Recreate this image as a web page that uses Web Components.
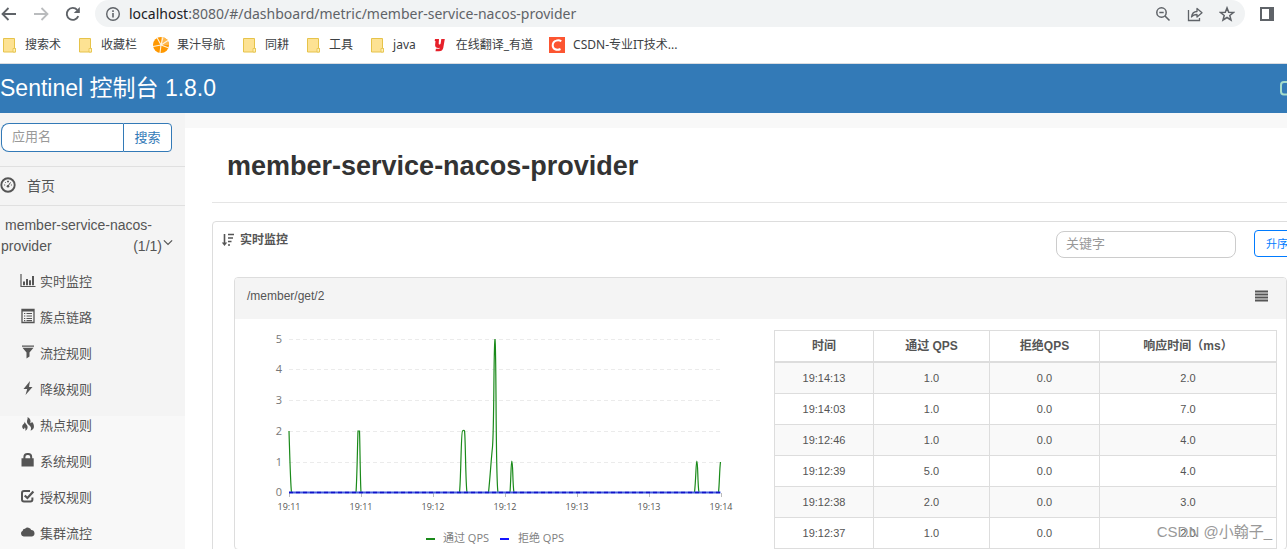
<!DOCTYPE html>
<html lang="zh-CN">
<head>
<meta charset="utf-8">
<title>Sentinel 控制台</title>
<style>
  html { height: 100%; }
  body {
    margin: 0; height: 100%; overflow: hidden; background: #fff; color: #555;
    font-family: "Liberation Sans", "Noto Sans CJK SC", sans-serif; font-size: 14px;
  }
</style>
</head>
<body>
<sentinel-page></sentinel-page>

<script>
const ICONS = {
  back: '<path d="M15 8H2M7.500 2L1.500 8l6 6" fill="none" stroke="currentColor" stroke-width="1.800"/>',
  forward: '<path d="M1 8h13M8.500 2l6 6-6 6" fill="none" stroke="currentColor" stroke-width="1.800"/>',
  reload: '<path d="M13.300 10.200A6 6 0 1 1 12.200 3.800" fill="none" stroke="currentColor" stroke-width="1.900"/><path d="M14.800 1v6H8.800z" fill="currentColor"/>',
  info: '<circle cx="8" cy="8" r="6.300" fill="none" stroke="currentColor" stroke-width="1.400"/><path d="M7.200 7h1.600v4.500H7.200zM7.200 4.300h1.600v1.600H7.200z" fill="currentColor"/>',
  zoomout: '<circle cx="6.500" cy="6.500" r="4.700" fill="none" stroke="currentColor" stroke-width="1.500"/><path d="M10 10l4.500 4.500M4.300 6.500h4.400" stroke="currentColor" stroke-width="1.600"/>',
  share: '<path d="M1.500 4v10.500h11V12" fill="none" stroke="currentColor" stroke-width="1.300"/><path d="M4.500 11c.5-3.600 2.300-5.500 5.500-5.500V2.500L15 6.800 10 11V8.500c-2.500 0-4.300.8-5.500 2.500z" fill="none" stroke="currentColor" stroke-width="1.300" stroke-linejoin="round"/>',
  star: '<path d="M8 1.900l1.700 4.300 4.700.3-3.600 3 1.200 4.500L8 11.500 4 14l1.200-4.500-3.600-3 4.700-.3z" fill="none" stroke="currentColor" stroke-width="1.500"/>',
  panel: '<path d="M1 1h14v14H1zM3 3v10h7V3z" fill="currentColor" fill-rule="evenodd"/>',
  folder: '<path d="M2.500 1.500h11v9.500l1 .5v3.500h-12z" fill="#fde293" stroke="#e6c34a"/><path d="M12 15v-3.500h2.500V15z" fill="#fff0b8" stroke="#e6c34a" stroke-width=".8"/>',
  orange: '<circle cx="8" cy="8" r="8" fill="#ff9800"/><path d="M8 0a8 8 0 0 1 8 8H8z" fill="#ffb74d"/><path d="M8 8L4 .500M8 8l7-4.500M8 8l8 3M8 8l-1 8M8 8l-8 1.500M8 8L10 0" stroke="#fff3df" stroke-width="1.100"/>',
  youdao: '<path d="M3 2h4l-.3 4.500c0 1.500 1.800 1 2-.3L9.300 2h3.500l-1.500 8.700c-.5 2.500-2 3.500-4.300 3.500H3.500l.4-2.400H6.300c1 0 1.500-.3 1.700-1-3 .7-5-.4-4.900-2.700L3.500 4H2.700z" fill="#e6202a"/>',
  csdn: '<path d="M0 0h16v16H0z" fill="#fc5531"/><path d="M12.300 4.300C11 3.400 8.900 3 7.300 3.600 5 4.300 3.700 6.200 3.700 8.500c0 3.600 4 5.300 7.800 3.500" fill="none" stroke="#fff" stroke-width="2"/>',
  gauge: '<circle cx="8" cy="8" r="6.700" fill="none" stroke="currentColor" stroke-width="1.900"/><circle cx="8" cy="9.200" r="1.300" fill="currentColor"/><path d="M8 9l2.600-3.600" stroke="currentColor"/><path d="M4 8h1.200M5.200 5.200l.8.8M7.500 4h1v1h-1zM10.900 8H12" stroke="currentColor" stroke-width=".9" fill="none"/>',
  bars: '<path d="M1 2v12.500H15.500" fill="none" stroke="currentColor" stroke-width="1.200"/><path d="M3 9.500h2v3.700H3zM6 7h2v6.200H6zM9 8.300h2v4.900H9zM12 4h2v9.200h-2z" fill="currentColor"/>',
  list: '<path d="M2 1.500h12v13H2z" fill="none" stroke="currentColor" stroke-width="1.300"/><path d="M2 1h12v2.500H2z" fill="currentColor"/><path d="M4 5.500h1.300M6.500 5.500H12M4 8h1.300M6.500 8H12M4 10.500h1.300M6.500 10.500H12M4 12.700h1.300M6.500 12.700H12" stroke="currentColor" stroke-width="1.200"/>',
  funnel: '<path d="M2 1.500h12v1.300H2zM2.500 3.800h11L9.500 8.500v4l-3 2V8.500z" fill="currentColor"/>',
  bolt: '<path d="M10 1L3.500 9h3.700L5.500 15 12.500 7H9z" fill="currentColor"/>',
  fire: '<path d="M7.500 1c3 1.500 3.500 3.500 2.800 6 .7.400 1.400 0 1.500-1.200 2 1.700 2.500 4 2 6-.5 1.500-1.800 2.500-3.300 2.800 1.200-2 .5-3.600-1-5C7.900 8.200 6.700 7 7 5c.2-1.500 1-2.500.5-4zM4.700 5.500c.3 2.200 3.200 3.500 2.900 6-.1 1.600-1 2.700-2.400 3.300.6-1.500.2-2.600-.4-3.500-.2 1-.6 1.400-1.200 2C1.500 11.700 2 9.500 3.300 8.300c.9-.9 1.400-1.700 1.400-2.800z" fill="currentColor"/>',
  lock: '<path d="M1.500 6.200h1.900V5a4 4 0 0 1 4-4h.8a4 4 0 0 1 4 4v1.200h1.500V14.500H1.500zM5.400 6.200h4.800V5A2 2 0 0 0 8.200 3h-.8a2 2 0 0 0-2 2z" fill="currentColor" fill-rule="evenodd"/>',
  check: '<path d="M10 3H4a2 2 0 0 0-2 2v6.500a2 2 0 0 0 2 2h6.400a2 2 0 0 0 2-2V9.500" fill="none" stroke="currentColor" stroke-width="2"/><path d="M4.700 7.500L7.400 10l6-6.500" fill="none" stroke="currentColor" stroke-width="2.200"/>',
  cloud: '<path d="M3.700 12.500a3 3 0 0 1-1-5.700 2.200 2.200 0 0 1 2.300-2.100A3.900 3.900 0 0 1 11.300 6a3.300 3.300 0 0 1 .7 6.500z" fill="currentColor"/>',
  chevron: '<path d="M2.500 4.500l5.500 5.500 5.500-5.500" fill="none" stroke="currentColor" stroke-width="1.600"/>',
  sort: '<path d="M3.500 2v10" stroke="currentColor" stroke-width="1.600"/><path d="M.8 10.500h5.400L3.500 14z" fill="currentColor"/><path d="M7 2.500h6M7 6h5M7 9.500h3.500M7 13h2" stroke="currentColor" stroke-width="1.600"/>',
  lines: '<path d="M1 3.500h13M1 6.500h13M1 9.500h13M1 12.500h13" stroke="currentColor" stroke-width="1.800"/>',
  locale: '<path d="M16 2H7a3 3 0 0 0-3 3v6.500a3 3 0 0 0 3 3h9" fill="none" stroke="currentColor" stroke-width="2"/><path d="M11 7h5v4h-5z" fill="currentColor"/>'
};

const define = (name, html, setup) => customElements.define(name, class extends HTMLElement {
  constructor() {
    super();
    const template = document.createElement('template');
    template.innerHTML = html;
    this.attachShadow({ mode: 'open' }).append(template.content.cloneNode(true));
  }
  connectedCallback() { if (setup) setup(this, this.shadowRoot); }
});

define('ui-icon', `
  <style>
    :host { display: inline-block; width: 16px; height: 16px; flex: none; }
    svg { display: block; width: 100%; height: 100%; }
  </style>
  <svg viewBox="0 0 16 16" aria-hidden="true"></svg>`,
  (host, root) => { root.querySelector('svg').innerHTML = ICONS[host.getAttribute('name')] || ''; });

define('address-bar', `
  <style>
    :host { display: flex; align-items: center; height: 27px; color: #5f6368; padding: 0 12px 0 1px; }
    button { border: 0; padding: 0; background: none; color: inherit; display: flex; }
    .nav { display: flex; gap: 16px; }
    .nav button:nth-child(2) { color: #babcbe; }
    .pill { flex: 1; display: flex; align-items: center; gap: 8px; height: 27px; margin: 0 14px;
      padding: 0 10px; border-radius: 14px; background: #f1f3f4; }
    .url { flex: 1; font: 14px/20px "Noto Sans", sans-serif; }
    b { font-weight: 400; color: #202124; }
    .tools { display: flex; gap: 16px; }
  </style>
  <div class="nav">
    <button aria-label="后退"><ui-icon name="back"></ui-icon></button>
    <button aria-label="前进"><ui-icon name="forward"></ui-icon></button>
    <button aria-label="刷新"><ui-icon name="reload"></ui-icon></button>
  </div>
  <div class="pill">
    <ui-icon name="info"></ui-icon>
    <span class="url"><b>localhost</b>:8080/#/dashboard/metric/member-service-nacos-provider</span>
    <div class="tools">
      <button aria-label="缩放"><ui-icon name="zoomout"></ui-icon></button>
      <button aria-label="分享"><ui-icon name="share"></ui-icon></button>
      <button aria-label="收藏"><ui-icon name="star"></ui-icon></button>
    </div>
  </div>
  <button aria-label="侧边栏"><ui-icon name="panel"></ui-icon></button>`);

define('bookmark-link', `
  <style>
    :host { display: block; }
    a { display: flex; align-items: center; gap: 8px; color: #3c4043; text-decoration: none;
      white-space: nowrap; font: 12px/18px "Noto Sans", "Noto Sans CJK SC", sans-serif; }
  </style>
  <a href="#"><ui-icon></ui-icon><slot></slot></a>`,
  (host, root) => {
    const icon = document.createElement('ui-icon');
    icon.setAttribute('name', host.getAttribute('icon'));
    root.querySelector('ui-icon').replaceWith(icon);
  });

define('bookmark-bar', `
  <style>
    :host { display: flex; align-items: center; gap: 16px; height: 36px; padding-left: 1px;
      border-bottom: 1px solid #dadce0; }
  </style>
  <bookmark-link icon="folder">搜索术</bookmark-link>
  <bookmark-link icon="folder">收藏栏</bookmark-link>
  <bookmark-link icon="orange">果汁导航</bookmark-link>
  <bookmark-link icon="folder">同耕</bookmark-link>
  <bookmark-link icon="folder">工具</bookmark-link>
  <bookmark-link icon="folder">java</bookmark-link>
  <bookmark-link icon="youdao">在线翻译_有道</bookmark-link>
  <bookmark-link icon="csdn">CSDN-专业IT技术...</bookmark-link>`);

define('app-header', `
  <style>
    :host { display: flex; justify-content: space-between; align-items: center; height: 47px;
      padding-bottom: 2px; background: #337ab7; color: #fff; overflow: hidden; }
    a { color: inherit; text-decoration: none; font-size: 23px; line-height: 46px; }
    ui-icon { color: #a5dccb; margin-right: -6px; }
  </style>
  <a href="#">Sentinel 控制台 1.8.0</a>
  <ui-icon name="locale"></ui-icon>`);

define('nav-link', `
  <style>
    :host { display: block; }
    a { display: flex; align-items: center; gap: 4px; height: 36px; padding-left: 20px;
      color: #555; text-decoration: none; font-size: 13px; }
  </style>
  <a href="#"><ui-icon></ui-icon><slot></slot></a>`,
  (host, root) => {
    const icon = document.createElement('ui-icon');
    icon.setAttribute('name', host.getAttribute('icon'));
    root.querySelector('ui-icon').replaceWith(icon);
  });

define('side-nav', `
  <style>
    :host { display: block; width: 185px; flex: none; box-sizing: border-box; color: #555;
      background: linear-gradient(#f4f4f4 303px, #f8f8f8 303px); }
    form { display: flex; padding: 10px 13px 14px 1px; border-bottom: 1px solid #e0e0e0; }
    input, button { box-sizing: border-box; height: 29px; border: 1px solid #337ab7; background: #fff;
      font-family: inherit; font-size: 13px; }
    input { flex: 1; min-width: 0; padding: 0 10px 2px; border-right: 0; border-radius: 8px 0 0 8px; }
    input::placeholder { color: #999; }
    button { width: 49px; padding: 0 0 2px; color: #337ab7; border-radius: 0 4px 4px 0; }
    .home { display: flex; align-items: center; gap: 11px; height: 36px; padding-bottom: 2px;
      border-bottom: 1px solid #e0e0e0; color: #555; text-decoration: none; }
    .app { display: block; padding: 9px 13px 5px 1px; line-height: 21px; color: #555; text-decoration: none; }
    .row { display: flex; }
    .row span { flex: 1; }
    .first { padding-left: 4px; }
    .row ui-icon { width: 12px; height: 12px; margin-top: 1px; margin-right: -2px; }
  </style>
  <form><input aria-label="应用名" placeholder="应用名"><button type="button">搜索</button></form>
  <a class="home" href="#"><ui-icon name="gauge"></ui-icon>首页</a>
  <a class="app" href="#">
    <div class="first">member-service-nacos-</div>
    <div class="row"><span>provider</span>(1/1)<ui-icon name="chevron"></ui-icon></div>
  </a>
  <nav>
    <nav-link icon="bars">实时监控</nav-link>
    <nav-link icon="list">簇点链路</nav-link>
    <nav-link icon="funnel">流控规则</nav-link>
    <nav-link icon="bolt">降级规则</nav-link>
    <nav-link icon="fire">热点规则</nav-link>
    <nav-link icon="lock">系统规则</nav-link>
    <nav-link icon="check">授权规则</nav-link>
    <nav-link icon="cloud">集群流控</nav-link>
  </nav>`);

define('qps-chart', `
  <style>
    :host { display: block; }
    svg { display: block; width: 100%; height: auto; font-family: "Open Sans", "Noto Sans CJK SC", sans-serif; }
    .grid { stroke: #ebebeb; stroke-dasharray: 4 3; }
    .y text { font-size: 11px; text-anchor: end; fill: #777; }
    .x text { font-size: 9px; text-anchor: middle; fill: #555; }
    .legend { font-size: 11px; fill: #808080; }
  </style>
  <svg viewBox="0 0 539 230" role="img" aria-label="QPS">
    <g class="grid"></g><g class="y"></g><g class="x"></g>
    <path d="M54 112C55 145 55.500 165 56.500 173.500H121C122 160 122.500 125 123 112H124.500C125 125 125.200 160 126 173.500H224.500C226 160 226 113 227.500 112Q229 110.500 229.500 112C230.500 116 230.500 165 232 173.500H253.500C255 160 256 142 257.500 128C259.300 105 258.500 30 260 20C261.500 30 260.500 160 263 173.500H275C276 160 276 142 276.800 142C278 142 277.500 165 279 173.500H459.500C461 160 461 142 461.800 142C463 142 462.500 165 464 173.500H483.500C484.500 165 484.500 150 485.500 143" fill="none" stroke="#1a8a1a" stroke-width="1.200"/>
    <path d="M54 173.500H485.500" stroke="#4660e0" stroke-width="2"/>
    <path d="M54 173.500H485.500" stroke="#1212c8" stroke-width="1.500" stroke-dasharray="4 3"/>
    <path d="M191 220h9" stroke="#1a8a1a" stroke-width="2"/>
    <text class="legend" x="208" y="223">通过 QPS</text>
    <path d="M265 220h9" stroke="#1414ff" stroke-width="2"/>
    <text class="legend" x="283" y="223">拒绝 QPS</text>
  </svg>`,
  (host, root) => {
    const ys = [173, 143, 112, 81, 50, 20];
    root.querySelector('.grid').innerHTML = ys.slice(1).map(y => `<path d="M54 ${y}.5H485"/>`).join('');
    root.querySelector('.y').innerHTML = ys.map((y, i) => `<text x="47" y="${y + 4}">${i}</text>`).join('');
    root.querySelector('.x').innerHTML = ['19:11', '19:11', '19:12', '19:12', '19:13', '19:13', '19:14']
      .map((t, i) => `<path d="M${54 + i * 72}.500 174v4" stroke="#bbb"/><text x="${54 + i * 72}" y="191">${t}</text>`).join('');
  });

define('qps-table', `
  <style>
    :host { display: block; padding-top: 11px; }
    table { width: 100%; border-collapse: collapse; table-layout: fixed; color: #555; font-size: 11px; text-align: center; }
    th, td { border: 1px solid #ddd; padding: 0; }
    th { height: 30px; border-bottom-width: 2px; font-size: 12px; line-height: 18px; }
    td { height: 30px; line-height: 16px; }
    tbody tr:nth-child(odd) { background: #f9f9f9; }
    .time { width: 99px; }
    .pass { width: 116px; }
    .block { width: 110px; }
  </style>
  <table>
    <colgroup><col class="time"><col class="pass"><col class="block"><col></colgroup>
    <thead><tr><th>时间</th><th>通过 QPS</th><th>拒绝QPS</th><th>响应时间（ms）</th></tr></thead>
    <tbody></tbody>
  </table>`,
  (host, root) => {
    root.querySelector('tbody').innerHTML = [
      ['19:14:13', '1.0', '0.0', '2.0'], ['19:14:03', '1.0', '0.0', '7.0'], ['19:12:46', '1.0', '0.0', '4.0'],
      ['19:12:39', '5.0', '0.0', '4.0'], ['19:12:38', '2.0', '0.0', '3.0'], ['19:12:37', '1.0', '0.0', '2.0']
    ].map(r => `<tr>${r.map(c => `<td>${c}</td>`).join('')}</tr>`).join('');
  });

define('resource-card', `
  <style>
    :host { display: block; border: 1px solid #ddd; border-radius: 4px; }
    header { display: flex; align-items: center; justify-content: space-between; height: 36px;
      padding: 0 16px 5px 12px; background: #f4f4f4; border-radius: 3px 3px 0 0; font-size: 12px; }
    button { border: 0; padding: 0; background: none; color: inherit; display: flex; }
    .body { display: grid; grid-template-columns: 539fr 503fr; padding-right: 9px; }
  </style>
  <header><slot></slot><button aria-label="菜单"><ui-icon name="lines"></ui-icon></button></header>
  <div class="body"><qps-chart></qps-chart><qps-table></qps-table></div>`);

define('metric-panel', `
  <style>
    :host { display: block; border: 1px solid #ddd; border-radius: 4px; padding: 8px 23px 22px 21px; }
    .bar { display: flex; align-items: flex-start; gap: 18px; height: 47px; }
    h2 { flex: 1; display: flex; align-items: center; gap: 3px; margin: 0 0 0 -13px; font-size: 12px; line-height: 20px; }
    input, button { box-sizing: border-box; height: 27px; background: #fff; font-family: inherit; }
    input { width: 180px; margin-top: 1px; padding: 0 9px 2px; border: 1px solid #ccc; border-radius: 8px; font-size: 13px; }
    input::placeholder { color: #999; }
    button { flex: none; width: 46px; margin-right: -13px; padding: 0 0 2px; border: 1px solid #007bff; border-radius: 4px; color: #007bff; font-size: 11px; }
  </style>
  <div class="bar">
    <h2><ui-icon name="sort"></ui-icon>实时监控</h2>
    <input aria-label="关键字" placeholder="关键字">
    <button>升序</button>
  </div>
  <resource-card>/member/get/2</resource-card>`);

define('metric-page', `
  <style>
    :host { display: block; flex: 1; min-width: 0; overflow: hidden; background: #fff; border-top: 15px solid #f8f8f8; }
    h1 { margin: 0 0 18px 27px; padding: 18px 15px 15px; border-bottom: 1px solid #e5e5e5;
      color: #333; font-size: 27px; line-height: 41px; white-space: nowrap; }
    metric-panel { margin: 0 -24px 0 27px; }
  </style>
  <h1>member-service-nacos-provider</h1>
  <metric-panel></metric-panel>`);

define('sentinel-page', `
  <style>
    :host { display: flex; flex-direction: column; height: 100vh; overflow: hidden; position: relative; }
    .content { flex: 1; min-height: 0; display: flex; overflow: hidden; }
    .mark { position: absolute; right: 15px; bottom: 5px; font-size: 15px; line-height: 24px; color: #999; }
  </style>
  <address-bar></address-bar>
  <bookmark-bar></bookmark-bar>
  <app-header></app-header>
  <div class="content"><side-nav></side-nav><metric-page></metric-page></div>
  <div class="mark">CSDN @小翰子_</div>`);
</script>
</body>
</html>
